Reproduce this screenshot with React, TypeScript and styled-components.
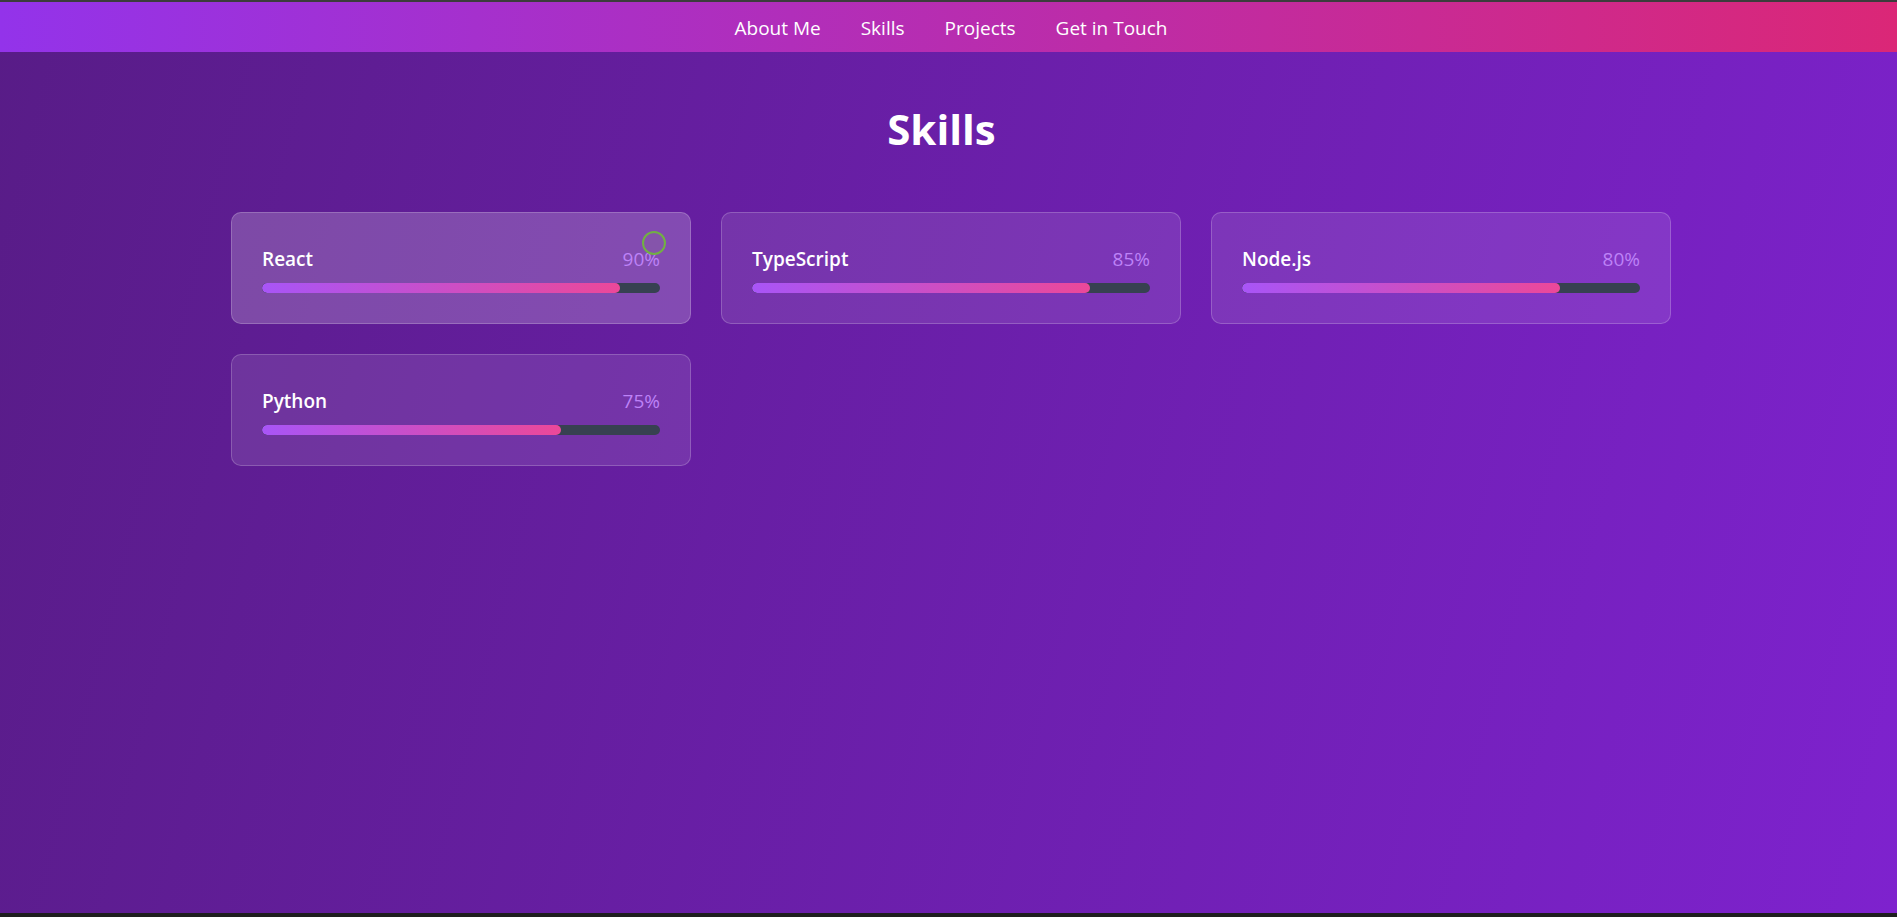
import React from "react";
import styled, { createGlobalStyle } from "styled-components";

const GlobalStyle = createGlobalStyle`
  html, body { margin: 0; padding: 0; }
  body {
    background: #1f1f1f;
    font-family: "Open Sans", "Noto Sans", "Liberation Sans", sans-serif;
    -webkit-font-smoothing: antialiased;
  }
  * { box-sizing: border-box; }
`;

const Frame = styled.div`
  height: 917px;
  border-top: 2px solid #3c3c3c;
  background: #1e1e1e;
  overflow: hidden;
`;

const Screen = styled.div`
  height: 911px;
  display: flex;
  flex-direction: column;
  background: linear-gradient(104deg, #581c87, #7e22ce);
`;

const Nav = styled.nav`
  height: 50px;
  flex-shrink: 0;
  display: flex;
  align-items: center;
  justify-content: center;
  gap: 40px;
  padding: 2px 0 0 5px;
  background: linear-gradient(to right, #9333ea, #db2777);
`;

const NavLink = styled.a`
  color: #ffffff;
  font-size: 19px;
  line-height: 30px;
  text-decoration: none;
  cursor: pointer;
`;

const Main = styled.main`
  padding: 52px 0 0 5px;
  display: flex;
  flex-direction: column;
  align-items: center;
`;

const Title = styled.h2`
  margin: 0 19px 58px 0;
  font-size: 42px;
  line-height: 50px;
  font-weight: 700;
  color: #ffffff;
`;

const Grid = styled.div`
  width: 1440px;
  display: grid;
  grid-template-columns: repeat(3, 1fr);
  gap: 30px;
`;

const Card = styled.div<{ $hover?: boolean }>`
  position: relative;
  padding: 30px;
  border: 1px solid rgba(255, 255, 255, 0.2);
  border-radius: 10px;
  background: ${(p) => (p.$hover ? "rgba(255,255,255,0.2)" : "rgba(255,255,255,0.1)")};
`;

const Row = styled.div`
  display: flex;
  justify-content: space-between;
  align-items: center;
  height: 30px;
  padding-top: 2px;
  margin-bottom: 10px;
`;

const Name = styled.span`
  color: #ffffff;
  font-size: 19px;
  font-weight: 600;
`;

const Percent = styled.span`
  color: #bd82f7;
  font-size: 19px;
  font-weight: 400;
`;

const Track = styled.div`
  height: 10px;
  border-radius: 9999px;
  background: #374151;
  overflow: hidden;
`;

const Fill = styled.div`
  height: 100%;
  border-radius: 9999px;
  background: linear-gradient(to right, #a855f7, #ec4899);
`;

const CursorRing = styled.div`
  position: absolute;
  left: 410px;
  top: 18px;
  width: 24px;
  height: 24px;
  border-radius: 50%;
  border: 2px solid #72b043;
  background: rgba(140, 110, 150, 0.25);
  pointer-events: none;
`;

const skills = [
  { name: "React", level: 90, hover: true },
  { name: "TypeScript", level: 85 },
  { name: "Node.js", level: 80 },
  { name: "Python", level: 75 },
];

export default function App() {
  return (
    <>
      <GlobalStyle />
      <Frame>
        <Screen>
          <Nav>
            <NavLink>About Me</NavLink>
            <NavLink>Skills</NavLink>
            <NavLink>Projects</NavLink>
            <NavLink>Get in Touch</NavLink>
          </Nav>
          <Main>
            <Title>Skills</Title>
            <Grid>
              {skills.map((s) => (
                <Card key={s.name} $hover={s.hover}>
                  <Row>
                    <Name>{s.name}</Name>
                    <Percent>{s.level}%</Percent>
                  </Row>
                  <Track>
                    <Fill style={{ width: `${s.level}%` }} />
                  </Track>
                  {s.hover && <CursorRing />}
                </Card>
              ))}
            </Grid>
          </Main>
        </Screen>
      </Frame>
    </>
  );
}
